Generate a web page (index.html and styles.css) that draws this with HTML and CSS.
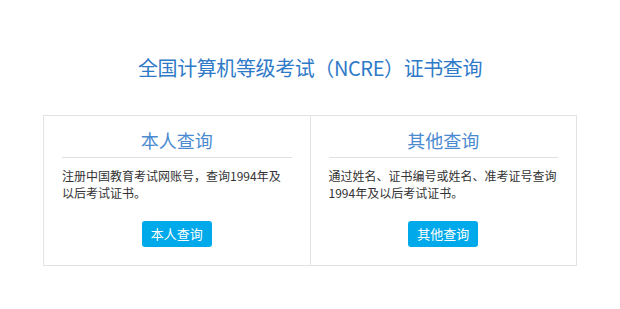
FILE: index.html
```html
<!DOCTYPE html>
<html lang="zh-CN">
<head>
    <meta charset="UTF-8">
    <title>NCRE 证书查询</title>
    <link rel="stylesheet" href="styles.css">
</head>
<body>
    <h1 class="title">全国计算机等级考试（NCRE）证书查询</h1>
    <div class="boxes">
        <div class="box">
            <h2 class="box-title">本人查询</h2>
            <p class="box-text">注册中国教育考试网账号，查询1994年及以后考试证书。</p>
            <div class="box-foot"><a class="btn" href="#">本人查询</a></div>
        </div>
        <div class="box">
            <h2 class="box-title">其他查询</h2>
            <p class="box-text">通过姓名、证书编号或姓名、准考证号查询1994年及以后考试证书。</p>
            <div class="box-foot"><a class="btn" href="#">其他查询</a></div>
        </div>
    </div>
</body>
</html>
```

FILE: styles.css
```css
body {
    margin: 0;
    background: #fff;
    font-family: "Noto Sans CJK SC", "Noto Sans", sans-serif;
    color: #333;
}

.title {
    margin: 0;
    padding-top: 54px;
    text-align: center;
    font-size: 20px;
    font-weight: normal;
    line-height: 28px;
    letter-spacing: -0.4px;
    color: #2f7ac8;
}

.boxes {
    display: flex;
    width: 532px;
    margin: 33px auto 0;
    border: 1px solid #e3e3e3;
}

.box {
    flex: 1;
    padding: 11px 18px 18px;
}

.box + .box {
    border-left: 1px solid #e3e3e3;
}

.box-title {
    margin: 0;
    padding-bottom: 4px;
    border-bottom: 1px solid #e0e0e0;
    text-align: center;
    font-size: 18px;
    font-weight: normal;
    line-height: 26px;
    color: #4a8ad0;
}

.box-text {
    margin: 9px 0 0;
    height: 34px;
    font-size: 12px;
    line-height: 17px;
    color: #333;
}

.box-foot {
    margin-top: 19px;
    text-align: center;
}

.btn {
    display: inline-block;
    width: 70px;
    height: 26px;
    line-height: 26px;
    border-radius: 3px;
    background: #00aaea;
    color: #fff;
    font-size: 13px;
    text-decoration: none;
}
```
